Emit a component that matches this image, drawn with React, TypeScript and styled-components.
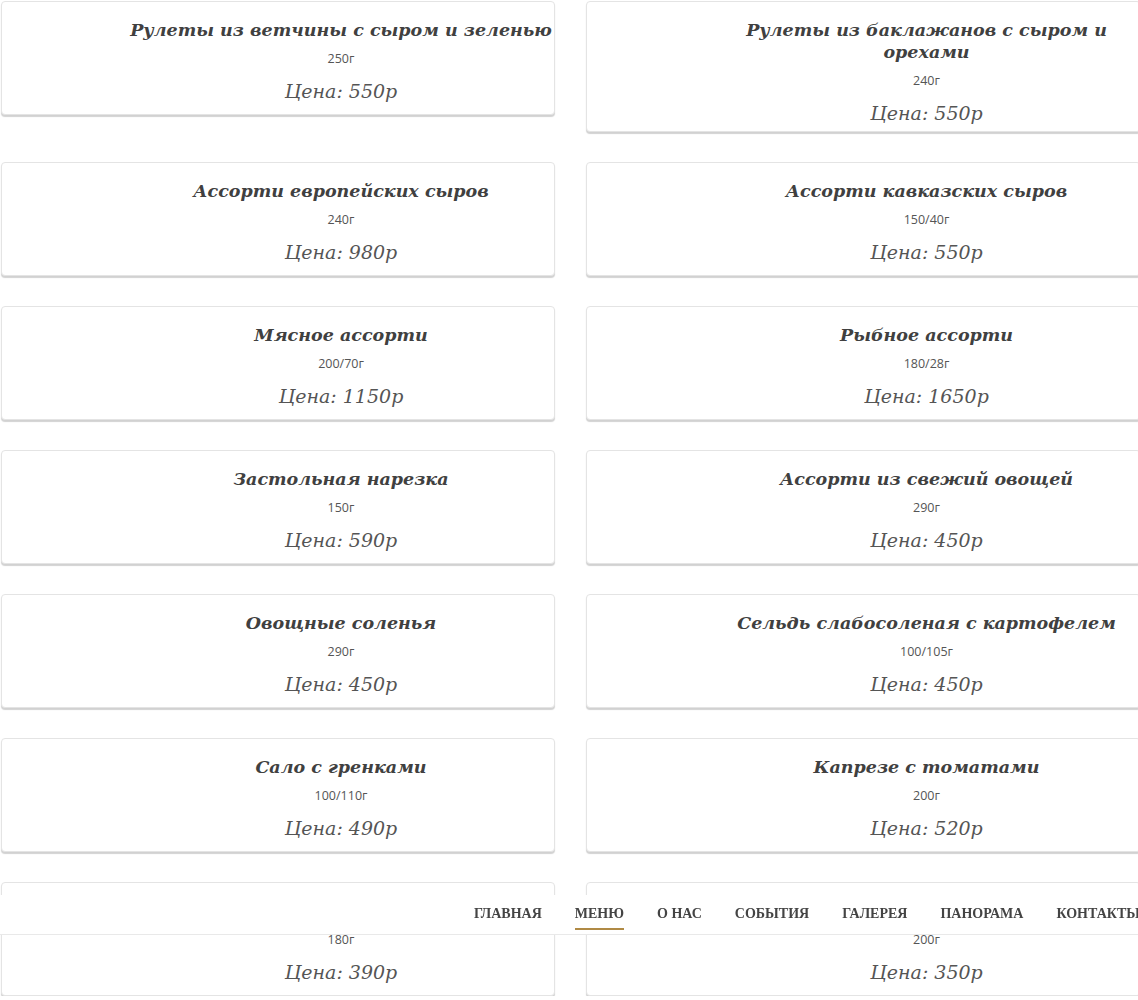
import React from "react";
import styled, { createGlobalStyle } from "styled-components";

const Global = createGlobalStyle`
  html, body {
    margin: 0;
    padding: 0;
    background: #ffffff;
    overflow: hidden;
  }
  body {
    font-family: "Liberation Serif", serif;
  }
`;

const Page = styled.div`
  width: 1141px;
  padding: 1px 0 0 1px;
  display: grid;
  grid-template-columns: 554px 555px;
  column-gap: 31px;
  row-gap: 30px;
  align-items: start;
`;

const Card = styled.div`
  box-sizing: border-box;
  min-height: 114px;
  border: 1px solid #e4e4e4;
  border-radius: 4px;
  box-shadow: 0 2px 1px rgba(0, 0, 0, 0.18);
  background: #fff;
  padding: 17px 0 4px 126px;
  display: flex;
  flex-direction: column;
  align-items: center;
  text-align: center;
`;

const Title = styled.h3`
  margin: 0 -6px;
  font-family: "DejaVu Serif", "Liberation Serif", serif;
  font-style: italic;
  font-weight: 700;
  font-size: 17.5px;
  line-height: 22px;
  color: #404040;
`;

const Weight = styled.div`
  margin-top: 10px;
  font-family: "Open Sans", Lato, sans-serif;
  font-size: 12.5px;
  line-height: 16px;
  color: #555555;
`;

const Price = styled.div`
  margin-top: 10px;
  font-family: "DejaVu Serif", "Liberation Serif", serif;
  font-style: italic;
  font-size: 19px;
  line-height: 28px;
  color: #555555;
`;

const Nav = styled.nav`
  position: fixed;
  top: 895px;
  left: 0;
  right: -2px;
  height: 40px;
  box-sizing: border-box;
  background: #ffffff;
  border-bottom: 1px solid #e9e9e9;
  display: flex;
  justify-content: flex-end;
  align-items: flex-start;
  gap: 33px;
`;

const NavItem = styled.a<{ $active?: boolean }>`
  display: block;
  padding: 10px 0 5px;
  border-bottom: 2px solid ${(p) => (p.$active ? "#b08a45" : "transparent")};
  font-family: "Liberation Serif", serif;
  font-weight: 700;
  font-size: 14px;
  line-height: 18px;
  text-transform: uppercase;
  color: #444444;
  text-decoration: none;
  white-space: nowrap;
`;

type Dish = { title: string; weight: string; price: string };

const dishes: Dish[] = [
  { title: "Рулеты из ветчины с сыром и зеленью", weight: "250г", price: "550" },
  { title: "Рулеты из баклажанов с сыром и орехами", weight: "240г", price: "550" },
  { title: "Ассорти европейских сыров", weight: "240г", price: "980" },
  { title: "Ассорти кавказских сыров", weight: "150/40г", price: "550" },
  { title: "Мясное ассорти", weight: "200/70г", price: "1150" },
  { title: "Рыбное ассорти", weight: "180/28г", price: "1650" },
  { title: "Застольная нарезка", weight: "150г", price: "590" },
  { title: "Ассорти из свежий овощей", weight: "290г", price: "450" },
  { title: "Овощные соленья", weight: "290г", price: "450" },
  { title: "Сельдь слабосоленая с картофелем", weight: "100/105г", price: "450" },
  { title: "Сало с гренками", weight: "100/110г", price: "490" },
  { title: "Капрезе с томатами", weight: "200г", price: "520" },
  { title: "\u00a0", weight: "180г", price: "390" },
  { title: "\u00a0", weight: "200г", price: "350" },
];

const navItems = ["Главная", "Меню", "О нас", "События", "Галерея", "Панорама", "Контакты"];

export default function App() {
  return (
    <>
      <Global />
      <Page>
        {dishes.map((d, i) => (
          <Card key={i}>
            <Title>{d.title}</Title>
            <Weight>{d.weight}</Weight>
            <Price>Цена: {d.price}р</Price>
          </Card>
        ))}
      </Page>
      <Nav>
        {navItems.map((n) => (
          <NavItem key={n} href="#" $active={n === "Меню"}>
            {n}
          </NavItem>
        ))}
      </Nav>
    </>
  );
}
